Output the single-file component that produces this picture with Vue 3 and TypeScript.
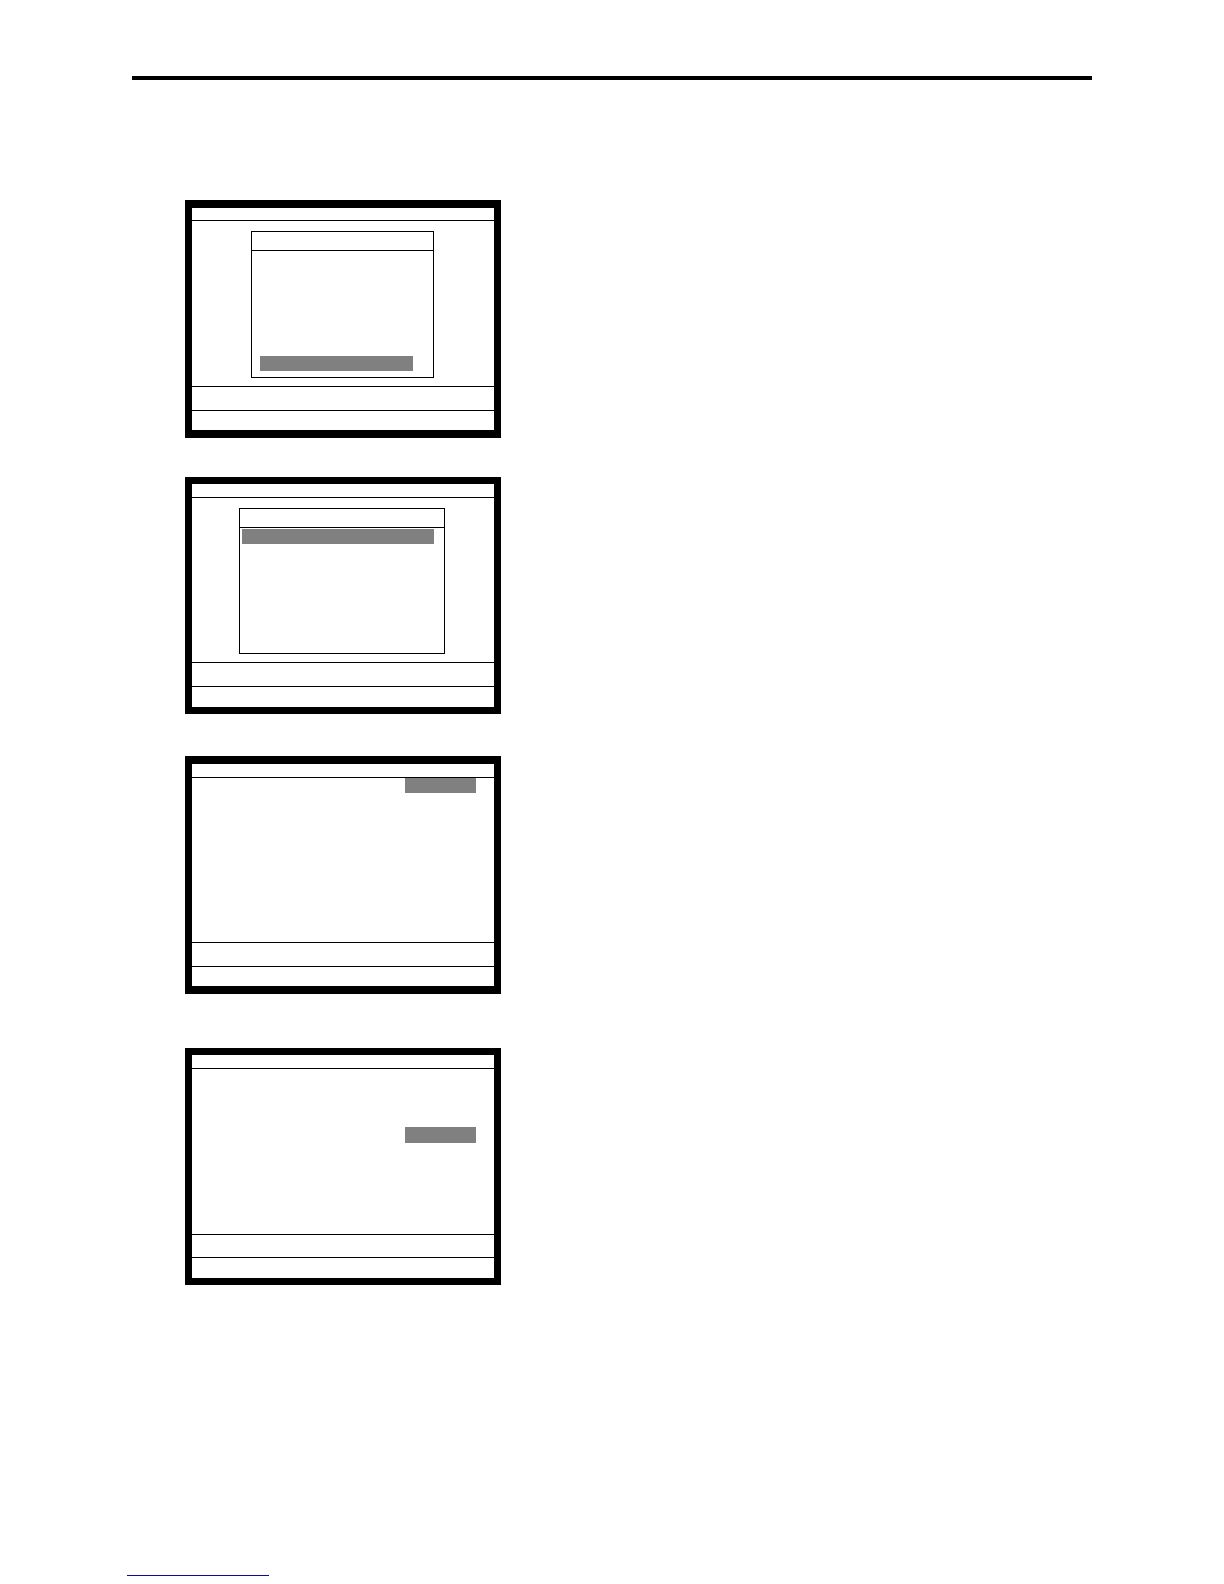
<script setup lang="ts">
interface Screen {
  id: string
  label: string
  dialog: boolean
}

const screens: Screen[] = [
  { id: 'menu', label: 'Menu screen', dialog: true },
  { id: 'submenu', label: 'Submenu screen', dialog: true },
  { id: 'first-field', label: 'Settings screen, first field', dialog: false },
  { id: 'middle-field', label: 'Settings screen, middle field', dialog: false },
]
</script>

<template>
  <div class="page">
    <header class="rule"></header>
    <main class="screens">
      <section
        v-for="screen in screens"
        :key="screen.id"
        class="screen"
        :class="screen.id"
        :aria-label="screen.label"
      >
        <div class="title"></div>
        <div class="body">
          <div v-if="screen.dialog" class="dialog">
            <div class="dialog-title"></div>
            <div class="highlight"></div>
          </div>
          <div v-else class="highlight"></div>
        </div>
        <div class="message"></div>
        <div class="status"></div>
      </section>
    </main>
    <footer class="footer">
      <a class="link" href="#" aria-label="Website"></a>
    </footer>
  </div>
</template>

<style>
body {
  margin: 0;
  background: #fff;
}
</style>

<style scoped>
.page {
  box-sizing: border-box;
  min-height: 100vh;
  display: flex;
  flex-direction: column;
  padding: 76px 127px 8px;
  font-family: "Liberation Sans", Arial, sans-serif;
}

.rule {
  height: 4px;
  margin: 0 5px;
  background: #000;
}

.screens {
  display: flex;
  flex-direction: column;
  padding: 120px 58px 0;
}

.screen {
  box-sizing: border-box;
  width: 316px;
  max-width: 100%;
  display: grid;
  grid-template-rows: 14px 164px 24px 21px;
  border: 7px solid #000;
}

.menu,
.first-field {
  border-width: 8px 7px;
}

.menu {
  grid-template-rows: 13px 165px 24px 20px;
}

.submenu {
  margin-top: 39px;
}

.first-field {
  grid-template-rows: 14px 164px 24px 20px;
  margin-top: 42px;
}

.middle-field {
  grid-template-rows: 14px 165px 23px 21px;
  margin-top: 54px;
}

.title {
  border-bottom: 1px solid #000;
}

.message,
.status {
  border-top: 1px solid #000;
}

.body {
  display: flex;
  flex-direction: column;
}

.dialog {
  box-sizing: border-box;
  display: flex;
  flex-direction: column;
  border: 1px solid #000;
}

.dialog-title {
  height: 18px;
  border-bottom: 1px solid #000;
}

.highlight {
  height: 15px;
  background: #808080;
}

.menu .dialog {
  height: 147px;
  margin: 10px 60px 0 59px;
}

.menu .highlight {
  margin: auto 20px 6px 8px;
}

.submenu .dialog {
  height: 146px;
  margin: 10px 49px 0 47px;
}

.submenu .highlight {
  margin: 1px 10px 0 2px;
}

.first-field .highlight,
.middle-field .highlight {
  width: 71px;
  margin: 0 18px 0 auto;
}

.middle-field .highlight {
  height: 16px;
  margin-top: 58px;
}

.footer {
  display: flex;
  margin-top: auto;
}

.link {
  width: 142px;
  height: 16px;
  border-bottom: 1px solid #0c0c98;
}
</style>
